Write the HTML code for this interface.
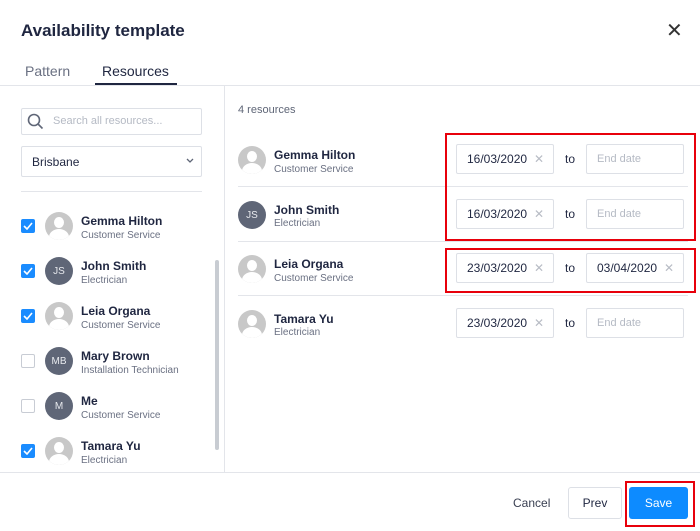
<!DOCTYPE html><html><head><style>
*{box-sizing:border-box;margin:0;padding:0}
body{width:700px;height:531px;background:#fff;font-family:"Liberation Sans",sans-serif;color:#1f2640;position:relative;overflow:hidden}
.a{position:absolute}
.t{font-size:17px;font-weight:bold;left:21px;top:21px}
.tab{font-size:14px;top:63px}
.cb{width:14px;height:14px;border-radius:2px;background:#1a8cff;left:21px}
.cb svg{position:absolute;left:2px;top:3px}
.cbo{width:14px;height:14px;border-radius:2px;border:1px solid #c8ccd4;left:21px}
.av{width:28px;height:28px;border-radius:50%;background:#c8c8c8;overflow:hidden}
.av.d{background:#5f6677;color:#e8eaee;font-size:10px;text-align:center;line-height:29px}
.av .h{position:absolute;left:9px;top:5px;width:10px;height:11px;border-radius:50%;background:#fff}
.av .b{position:absolute;left:4px;top:17px;width:20px;height:16px;border-radius:50%;background:#fff}
.n{font-size:12px;font-weight:bold}
.s{font-size:10px;color:#6a7082}
.db{width:98px;height:30px;border:1px solid #dde0e6;border-radius:2px;font-size:12px;line-height:28px;padding-left:10px}
.db .x{position:absolute;right:9px;top:0;color:#b8bcc5;font-size:12px}
.ph{color:#b5bac4;font-size:11px}
.to{font-size:12px;left:565px}
.hl{height:1px;background:#e3e5ea}
.red{border:2px solid #e8000b}
</style></head><body>
<div class="a t">Availability template</div>
<div class="a" style="left:666px;top:22px;font-size:20px;color:#333;line-height:18px">✕</div>
<div class="a tab" style="left:25px;color:#6a7082">Pattern</div>
<div class="a tab" style="left:102px">Resources</div>
<div class="a" style="left:95px;top:83px;width:82px;height:2px;background:#1f2640"></div>
<div class="a hl" style="left:0;top:85px;width:700px"></div>
<div class="a" style="left:224px;top:86px;width:1px;height:386px;background:#e3e5ea"></div>
<div class="a" style="left:21px;top:108px;width:181px;height:27px;border:1px solid #dde0e6;border-radius:2px"></div>
<svg class="a" style="left:27px;top:113px" width="17" height="17" viewBox="0 0 17 17"><circle cx="7" cy="7" r="5.5" fill="none" stroke="#5f6677" stroke-width="1.6"/><path d="M11 11l4.5 4.5" stroke="#5f6677" stroke-width="1.6"/></svg>
<div class="a" style="left:53px;top:115px;font-size:11px;color:#b5bac4">Search all resources...</div>
<div class="a" style="left:21px;top:146px;width:181px;height:31px;border:1px solid #dde0e6;border-radius:2px"></div>
<div class="a" style="left:32px;top:155px;font-size:12px">Brisbane</div>
<svg class="a" style="left:186px;top:158px" width="8" height="6"><path d="M1 1l3 3 3-3" fill="none" stroke="#5f6677" stroke-width="1.3"/></svg>
<div class="a hl" style="left:21px;top:191px;width:181px"></div>
<div class="a" style="left:215px;top:260px;width:4px;height:190px;background:#c8ccd2;border-radius:2px"></div>

<div class="a cb" style="top:219px"><svg width="10" height="8"><path d="M1 4l3 3 5-6" fill="none" stroke="#fff" stroke-width="1.6"/></svg></div>
<div class="a av" style="left:45px;top:212px"><div class="h"></div><div class="b"></div></div>
<div class="a n" style="left:81px;top:214px">Gemma Hilton</div><div class="a s" style="left:81px;top:230px">Customer Service</div>
<div class="a cb" style="top:264px"><svg width="10" height="8"><path d="M1 4l3 3 5-6" fill="none" stroke="#fff" stroke-width="1.6"/></svg></div>
<div class="a av d" style="left:45px;top:257px">JS</div>
<div class="a n" style="left:81px;top:259px">John Smith</div><div class="a s" style="left:81px;top:275px">Electrician</div>
<div class="a cb" style="top:309px"><svg width="10" height="8"><path d="M1 4l3 3 5-6" fill="none" stroke="#fff" stroke-width="1.6"/></svg></div>
<div class="a av" style="left:45px;top:302px"><div class="h"></div><div class="b"></div></div>
<div class="a n" style="left:81px;top:304px">Leia Organa</div><div class="a s" style="left:81px;top:320px">Customer Service</div>
<div class="a cbo" style="top:354px"></div>
<div class="a av d" style="left:45px;top:347px">MB</div>
<div class="a n" style="left:81px;top:349px">Mary Brown</div><div class="a s" style="left:81px;top:365px">Installation Technician</div>
<div class="a cbo" style="top:399px"></div>
<div class="a av d" style="left:45px;top:392px">M</div>
<div class="a n" style="left:81px;top:394px">Me</div><div class="a s" style="left:81px;top:410px">Customer Service</div>
<div class="a cb" style="top:444px"><svg width="10" height="8"><path d="M1 4l3 3 5-6" fill="none" stroke="#fff" stroke-width="1.6"/></svg></div>
<div class="a av" style="left:45px;top:437px"><div class="h"></div><div class="b"></div></div>
<div class="a n" style="left:81px;top:439px">Tamara Yu</div><div class="a s" style="left:81px;top:455px">Electrician</div>

<div class="a" style="left:238px;top:104px;font-size:11px;color:#5f6677">4 resources</div>

<div class="a av" style="left:238px;top:146px"><div class="h"></div><div class="b"></div></div>
<div class="a n" style="left:274px;top:148px">Gemma Hilton</div><div class="a s" style="left:274px;top:164px">Customer Service</div>
<div class="a db" style="left:456px;top:144px">16/03/2020<span class="x">✕</span></div>
<div class="a to" style="top:152px">to</div>
<div class="a db ph" style="left:586px;top:144px">End date</div>
<div class="a hl" style="left:238px;top:186px;width:450px"></div>

<div class="a av d" style="left:238px;top:201px">JS</div>
<div class="a n" style="left:274px;top:203px">John Smith</div><div class="a s" style="left:274px;top:218px">Electrician</div>
<div class="a db" style="left:456px;top:199px">16/03/2020<span class="x">✕</span></div>
<div class="a to" style="top:207px">to</div>
<div class="a db ph" style="left:586px;top:199px">End date</div>
<div class="a hl" style="left:238px;top:241px;width:450px"></div>

<div class="a av" style="left:238px;top:255px"><div class="h"></div><div class="b"></div></div>
<div class="a n" style="left:274px;top:257px">Leia Organa</div><div class="a s" style="left:274px;top:273px">Customer Service</div>
<div class="a db" style="left:456px;top:253px">23/03/2020<span class="x">✕</span></div>
<div class="a to" style="top:261px">to</div>
<div class="a db" style="left:586px;top:253px">03/04/2020<span class="x">✕</span></div>
<div class="a hl" style="left:238px;top:295px;width:450px"></div>

<div class="a av" style="left:238px;top:310px"><div class="h"></div><div class="b"></div></div>
<div class="a n" style="left:274px;top:312px">Tamara Yu</div><div class="a s" style="left:274px;top:327px">Electrician</div>
<div class="a db" style="left:456px;top:308px">23/03/2020<span class="x">✕</span></div>
<div class="a to" style="top:316px">to</div>
<div class="a db ph" style="left:586px;top:308px">End date</div>

<div class="a red" style="left:445px;top:133px;width:251px;height:108px"></div>
<div class="a red" style="left:445px;top:248px;width:251px;height:45px"></div>

<div class="a hl" style="left:0;top:472px;width:700px"></div>
<div class="a" style="left:513px;top:496px;font-size:12px;color:#3a4052">Cancel</div>
<div class="a" style="left:568px;top:487px;width:54px;height:32px;border:1px solid #dde0e6;border-radius:3px;font-size:12px;text-align:center;line-height:30px">Prev</div>
<div class="a red" style="left:625px;top:481px;width:70px;height:46px"></div>
<div class="a" style="left:629px;top:487px;width:59px;height:32px;background:#0d8bff;border-radius:3px;color:#fff;font-size:12px;text-align:center;line-height:32px">Save</div>
</body></html>
